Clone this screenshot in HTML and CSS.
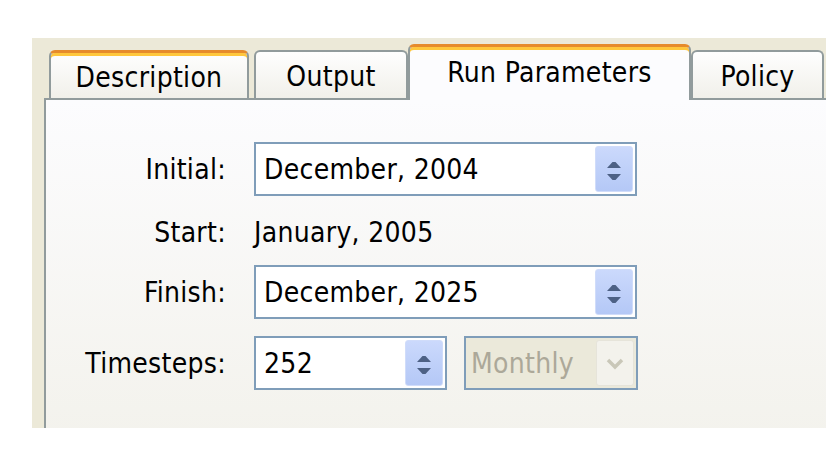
FILE: index.html
```html
<!DOCTYPE html>
<html lang="en">
<head>
  <meta charset="UTF-8">
  <title>Run Parameters</title>
  <link rel="stylesheet" href="styles.css">
</head>
<body>
  <div class="window">
    <div class="tabs">
      <div class="tab hot tab-description">Description</div>
      <div class="tab tab-output">Output</div>
      <div class="tab active tab-run">Run Parameters</div>
      <div class="tab tab-policy">Policy</div>
    </div>

    <div class="panel">
      <div class="form">
        <label class="label">Initial:</label>
        <div class="spin wide">
          <span class="value">December, 2004</span>
          <span class="spin-btn">
            <svg width="36" height="46" viewBox="0 0 36 46">
              <polygon points="11,21 16.5,15 19.5,15 25,21" fill="#4d6185"/>
              <polygon points="11,27 25,27 19.5,33 16.5,33" fill="#4d6185"/>
            </svg>
          </span>
        </div>

        <label class="label shifted">Start:</label>
        <div class="static shifted">January, 2005</div>

        <label class="label">Finish:</label>
        <div class="spin wide">
          <span class="value">December, 2025</span>
          <span class="spin-btn">
            <svg width="36" height="46" viewBox="0 0 36 46">
              <polygon points="11,21 16.5,15 19.5,15 25,21" fill="#4d6185"/>
              <polygon points="11,27 25,27 19.5,33 16.5,33" fill="#4d6185"/>
            </svg>
          </span>
        </div>

        <label class="label">Timesteps:</label>
        <div class="controls">
          <div class="spin narrow">
            <span class="value">252</span>
            <span class="spin-btn">
              <svg width="36" height="46" viewBox="0 0 36 46">
                <polygon points="11,21 16.5,15 19.5,15 25,21" fill="#4d6185"/>
                <polygon points="11,27 25,27 19.5,33 16.5,33" fill="#4d6185"/>
              </svg>
            </span>
          </div>
          <div class="combo disabled">
            <span class="value">Monthly</span>
            <span class="drop-btn">
              <svg width="36" height="46" viewBox="0 0 36 46">
                <polyline points="11,19 18,26 25,19" fill="none" stroke="#c9c7b8" stroke-width="3.5"/>
              </svg>
            </span>
          </div>
        </div>
      </div>
    </div>
  </div>
</body>
</html>
```

FILE: styles.css
```css
body {
  margin: 0;
  background-color: #ffffff;
  font-family: "DejaVu Sans", Tahoma, Verdana, sans-serif;
  font-stretch: condensed;
  font-size: 28px;
  letter-spacing: 0.3px;
  color: #000000;
}

.window {
  margin: 38px 0 0 32px;
  width: 794px;
  height: 390px;
  padding-top: 6px;
  box-sizing: border-box;
  background-color: #ece9d8;
  overflow: hidden;
}

/* tab strip */
.tabs {
  display: flex;
  align-items: flex-start;
  padding-left: 17px;
  height: 56px;
}

.tab {
  position: relative;
  box-sizing: border-box;
  height: 48px;
  margin-top: 6px;
  display: flex;
  align-items: center;
  justify-content: center;
  padding-top: 3px;
  border: 2px solid #919b9c;
  border-bottom: none;
  border-radius: 6px 6px 0 0;
  background: linear-gradient(#fefefe, #f1f0ea);
}

.tab.hot,
.tab.active {
  border-top: 3px solid #e68b2c;
  box-shadow: inset 0 3px 0 #ffc73c;
}

.tab.active {
  height: 56px;
  margin-top: 0;
  padding-top: 0;
  padding-bottom: 2px;
  background: #fcfcfe;
  z-index: 1;
}

.tab-description { width: 200px; margin-right: 5px; }
.tab-output { width: 154px; }
.tab-run { width: 283px; }
.tab-policy { width: 133px; }

/* tab page */
.panel {
  margin: -2px 0 0 12px;
  width: 820px;
  height: 350px;
  box-sizing: border-box;
  border: 2px solid #919b9c;
  background: linear-gradient(#fcfcfe, #f3f2ec);
}

.form {
  display: grid;
  grid-template-columns: 180px auto;
  grid-template-rows: 54px 35px 54px 54px;
  column-gap: 28px;
  row-gap: 17px;
  padding-top: 42px;
  align-items: center;
}

.label {
  text-align: right;
}

.shifted {
  padding-top: 4px;
}

.controls {
  display: flex;
  gap: 17px;
}

.spin,
.combo {
  box-sizing: border-box;
  height: 54px;
  display: flex;
  align-items: center;
  border: 2px solid #7f9db9;
  background-color: #ffffff;
}

.spin.wide { width: 383px; }
.spin.narrow { width: 193px; }

.value {
  flex: 1;
  padding-left: 8px;
  white-space: nowrap;
}

.spin-btn,
.drop-btn {
  box-sizing: border-box;
  width: 38px;
  height: 46px;
  margin-right: 2px;
  border-radius: 3px;
  display: flex;
}

.spin-btn {
  border: 1px solid #d0dcfa;
  background: linear-gradient(#cbd9fc, #b4c8f6);
}

.combo {
  width: 174px;
  background-color: #ebe9da;
}

.combo.disabled .value {
  color: #aca899;
  padding-left: 5px;
}

.drop-btn {
  border: 1px solid #e6e4da;
  background-color: #f3f2ec;
}

.static {
  white-space: nowrap;
}
```
